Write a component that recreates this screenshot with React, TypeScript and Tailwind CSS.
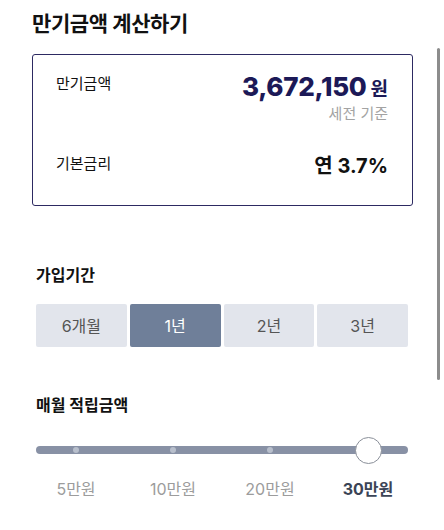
import React, { useState } from 'react';

const periods = ['6개월', '1년', '2년', '3년'];
const amounts = ['5만원', '10만원', '20만원', '30만원'];
const stops = [40, 137, 234, 332];

const App: React.FC = () => {
  const [period, setPeriod] = useState(1);
  const [amount, setAmount] = useState(3);

  return (
    <div
      className="relative w-[444px] h-[530px] bg-white overflow-hidden text-[#111]"
      style={{ fontFamily: 'Inter, "Noto Sans CJK KR", sans-serif' }}
    >
      {/* overlay scrollbar */}
      <div className="absolute left-[437px] top-[48px] w-[3px] h-[332px] rounded-full bg-[#8c8c8c]" />

      <div className="pl-[32px] pr-[32px] pt-[9px]">
        <h1 className="text-[21px] font-bold leading-[30px] tracking-[-0.4px]">만기금액 계산하기</h1>

        <div className="mt-[15px] w-[381px] h-[152px] border-[1.5px] border-[#2d2a62] rounded-[3px] pl-[23px] pr-[24px] pt-[16px]">
          <div className="flex justify-between">
            <span className="text-[15px] leading-[22px] mt-[2px]">만기금액</span>
            <div className="flex flex-col items-end">
              <div className="flex items-baseline text-[#1c1957] font-extrabold">
                <span className="text-[26px] leading-[32px] tracking-[-0.3px]">3,672,150</span>
                <span className="text-[19px] font-bold ml-[4px]">원</span>
              </div>
              <span className="text-[15px] leading-[22px] text-[#a3a3a3] -mt-[2px]">세전 기준</span>
            </div>
          </div>
          <div className="flex justify-between items-end mt-[28px]">
            <span className="text-[15px] leading-[22px] mb-[4px]">기본금리</span>
            <span className="text-[20px] font-bold leading-[26px]">연 3.7%</span>
          </div>
        </div>
      </div>

      <div className="px-[36px] mt-[57px]">
        <h2 className="text-[16px] font-bold leading-[24px]">가입기간</h2>
        <div className="mt-[17px] w-[372px] grid grid-cols-4 gap-[3px]">
          {periods.map((p, i) => (
            <button
              key={p}
              onClick={() => setPeriod(i)}
              className={`h-[43px] rounded-[2px] text-[16px] ${
                period === i ? 'bg-[#6f7f99] text-white' : 'bg-[#e2e5ec] text-[#555]'
              }`}
            >
              {p}
            </button>
          ))}
        </div>

        <h2 className="mt-[46px] text-[16px] font-bold leading-[24px]">매월 적립금액</h2>

        <div className="relative mt-[19px] w-[372px] h-[28px]">
          <div className="absolute left-0 right-0 top-[10px] h-[8px] rounded-full bg-[#8891a5]" />
          {stops.slice(0, 3).map((x, i) => (
            <button
              key={x}
              onClick={() => setAmount(i)}
              className="absolute top-[11px] w-[6px] h-[6px] -ml-[3px] rounded-full bg-[#b8bfcc]"
              style={{ left: x }}
            />
          ))}
          <div
            className="absolute top-[1px] w-[27px] h-[27px] -ml-[13.5px] rounded-full bg-white border border-[#8a8f99]"
            style={{ left: stops[amount] }}
          />
        </div>

        <div className="relative w-[372px] h-[24px] mt-[14px]">
          {stops.map((x, i) => (
            <span
              key={amounts[i]}
              onClick={() => setAmount(i)}
              className={`absolute -translate-x-1/2 text-[16px] leading-[22px] whitespace-nowrap ${
                amount === i ? 'font-bold text-[#3b4456]' : 'text-[#9c9c9c]'
              }`}
              style={{ left: x }}
            >
              {amounts[i]}
            </span>
          ))}
        </div>
      </div>
    </div>
  );
};

export default App;
